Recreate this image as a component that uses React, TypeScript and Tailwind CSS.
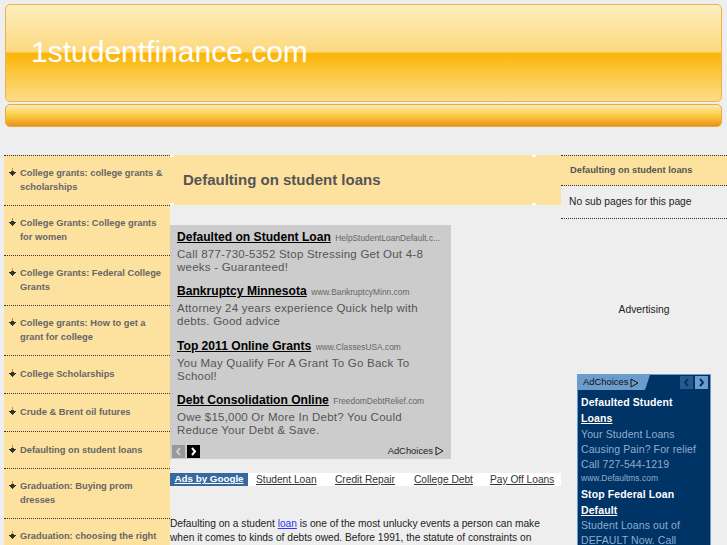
const menu = [
  { lines: ['College grants: college grants &', 'scholarships'], h: 'h-[50px]' },
  { lines: ['College Grants: College grants', 'for women'], h: 'h-[50px]' },
  { lines: ['College Grants: Federal College', 'Grants'], h: 'h-[50px]' },
  { lines: ['College grants: How to get a', 'grant for college'], h: 'h-[50px]' },
  { lines: ['College Scholarships'], h: 'h-[38px]' },
  { lines: ['Crude & Brent oil futures'], h: 'h-[38px]' },
  { lines: ['Defaulting on student loans'], h: 'h-[37px]' },
  { lines: ['Graduation: Buying prom', 'dresses'], h: 'h-[50px]' },
  { lines: ['Graduation: choosing the right'], h: 'h-[50px]' },
];

const ads = [
  {
    title: 'Defaulted on Student Loan',
    url: 'HelpStudentLoanDefault.c...',
    lines: ['Call 877-730-5352 Stop Stressing Get Out 4-8', 'weeks - Guaranteed!'],
  },
  {
    title: 'Bankruptcy Minnesota',
    url: 'www.BankruptcyMinn.com',
    lines: ['Attorney 24 years experience Quick help with', 'debts. Good advice'],
  },
  {
    title: 'Top 2011 Online Grants',
    url: 'www.ClassesUSA.com',
    lines: ['You May Qualify For A Grant To Go Back To', 'School!'],
  },
  {
    title: 'Debt Consolidation Online',
    url: 'FreedomDebtRelief.com',
    lines: ['Owe $15,000 Or More In Debt? You Could', 'Reduce Your Debt & Save.'],
  },
];

function MenuArrow() {
  return (
    <svg width="9" height="9" viewBox="0 0 9 9" className="shrink-0">
      <path d="M4 0h1v3H4z" fill="#d98a10" />
      <path d="M3 3h3v2H3zM1 4h7v1H1zM2 5h5v1H2zM3 6h3v1H3zM4 7h1v1H4z" fill="#333" />
    </svg>
  );
}

function AdChoicesIcon({ stroke }: { stroke: string }) {
  return (
    <svg width="9" height="10" viewBox="0 0 9 10">
      <path d="M1 1v8l7-4z" fill="none" stroke={stroke} strokeWidth="1" />
    </svg>
  );
}

function Notch({ className }: { className: string }) {
  return <span className={`absolute h-[2px] w-[4px] bg-white ${className}`} />;
}

export default function App() {
  return (
    <div className="h-[545px] w-[727px] overflow-hidden bg-[#eeeeee] font-['Liberation_Sans',Arial,sans-serif]">
      {/* header */}
      <div className="px-[5px] pt-[4px]">
        <div className="flex h-[98px] items-center rounded-[5px] border border-[#e9b44c] bg-[linear-gradient(#fdeebf_0%,#fdd97f_49%,#fbb408_50%,#fcc53a_70%,#fddc8a_100%)] pl-[25px] pb-[2px] text-[30px] leading-none text-white">
          1studentfinance.com
        </div>
        <div className="mt-[2px] h-[23px] rounded-[5px] border border-[#e8a94a] bg-[linear-gradient(#fdebb0_0%,#fbd14e_45%,#f7b52e_70%,#e8921a_100%)]" />
      </div>

      <div className="mt-[28px] flex items-start">
        {/* left menu */}
        <div className="w-[170px] pl-[4px]">
          <ul className="bg-[#fde29f]">
            {menu.map((item, i) => (
              <li
                key={item.lines[0]}
                className={`${item.h} flex border-t border-dotted border-[#333] pl-[4px] pb-[1px] ${i === menu.length - 1 ? 'items-start pt-[10px]' : 'items-center'}`}
              >
                <div className="flex w-full items-start">
                  <span className="mt-[2px] mr-[3px]">
                    <MenuArrow />
                  </span>
                  <div className="text-[9.3px] leading-[14px] font-bold text-[#666666]">
                    {item.lines.map((line) => (
                      <div key={line} className="whitespace-nowrap">{line}</div>
                    ))}
                  </div>
                </div>
              </li>
            ))}
          </ul>
        </div>

        {/* center */}
        <div className="w-[391px] min-w-0">
          <div className="relative flex h-[50px] items-center bg-[#fde29f] pl-[13px] text-[15px] font-bold text-[#555555]">
            Defaulting on student loans
            <Notch className="top-0 left-0" />
            <Notch className="bottom-0 left-0" />
            <Notch className="top-0 left-[362px]" />
            <Notch className="bottom-0 left-[362px]" />
          </div>

          <div className="mt-[20px] h-[234px] w-[281px] bg-[#cccccc] px-[7px] pt-[4px]">
            {ads.map((ad) => (
              <div key={ad.title} className="mb-[9.4px] h-[45px] whitespace-nowrap">
                <div className="leading-[13px]">
                  <span className="text-[12.1px] font-bold text-black underline">{ad.title}</span>{' '}
                  <span className="text-[8.4px] text-[#666666]">{ad.url}</span>
                </div>
                <div className="mt-[3px] text-[11.5px] leading-[13px] tracking-[0.23px] text-[#555555]">
                  {ad.lines.map((line) => (
                    <div key={line}>{line}</div>
                  ))}
                </div>
              </div>
            ))}
            <div className="relative -mx-[5px] -mt-[2.6px] flex items-center gap-[2px]">
              <span className="flex h-[13px] w-[13px] items-center justify-center bg-[#999999]">
                <svg width="7" height="9" viewBox="0 0 7 9"><path d="M5 1 2 4.5 5 8" fill="none" stroke="#cccccc" strokeWidth="2" /></svg>
              </span>
              <span className="flex h-[13px] w-[13px] items-center justify-center bg-black">
                <svg width="7" height="9" viewBox="0 0 7 9"><path d="M2 1l3 3.5L2 8" fill="none" stroke="#ffffff" strokeWidth="2" /></svg>
              </span>
              <span className="ml-auto mr-[5px] flex items-center gap-[2px] text-[9.4px] text-[#222222]">
                AdChoices <AdChoicesIcon stroke="#222222" />
              </span>
            </div>
          </div>

          <div className="mt-[14px] flex h-[13px] items-center whitespace-nowrap bg-white text-[10.2px] text-[#333333]">
            <span className="mr-[8px] flex h-[13px] w-[78px] items-center justify-center bg-[#36699f] text-[9.8px] font-bold text-white underline">
              Ads by Google
            </span>
            <span className="w-[79px] underline">Student Loan</span>
            <span className="w-[79px] underline">Credit Repair</span>
            <span className="w-[76px] underline">College Debt</span>
            <span className="underline">Pay Off Loans</span>
          </div>

          <p className="mt-[31px] whitespace-nowrap text-[10.2px] leading-[14px] text-[#222222]">
            Defaulting on a student <span className="text-[#3333ff] underline">loan</span> is one of the most unlucky events a person can make
            <br />
            when it comes to kinds of debts owed. Before 1991, the statute of constraints on
          </p>
        </div>

        {/* right */}
        <div className="w-[166px]">
          <div className="flex h-[31px] items-center border-t border-b border-dotted border-[#333] bg-[#fde29f] pl-[9px] text-[9.3px] font-bold text-[#555555]">
            Defaulting on student loans
          </div>
          <div className="flex h-[33px] items-center border-b border-dotted border-[#333] pl-[8px] text-[10.25px] text-[#222222]">
            No sub pages for this page
          </div>
          <div className="mt-[84px] text-center text-[10.3px] leading-[14px] text-[#222222]">Advertising</div>
          <div className="mt-[57px] ml-[16px] w-[134px] border border-[#6b9ccc] bg-[#003366] pb-[20px]">
            <div className="flex h-[15px] items-center">
              <div className="flex h-[15px] w-[72px] items-center gap-[2px] bg-[#6b9ccc] pl-[5px] text-[9.4px] text-[#111] [clip-path:polygon(0_0,100%_0,93%_100%,0_100%)]">
                AdChoices <AdChoicesIcon stroke="#111111" />
              </div>
              <span className="ml-auto flex h-[13px] w-[13px] items-center justify-center bg-[#255a8f]">
                <svg width="7" height="9" viewBox="0 0 7 9"><path d="M5 1 2 4.5 5 8" fill="none" stroke="#003366" strokeWidth="2" /></svg>
              </span>
              <span className="mx-[2px] flex h-[13px] w-[13px] items-center justify-center bg-[#6b9ccc]">
                <svg width="7" height="9" viewBox="0 0 7 9"><path d="M2 1l3 3.5L2 8" fill="none" stroke="#003366" strokeWidth="2" /></svg>
              </span>
            </div>
            <div className="whitespace-nowrap px-[3px] pt-[4px]">
              <div className="text-[10.5px] leading-[16px] font-bold tracking-[0.1px] text-white">
                Defaulted Student
                <br />
                <span className="underline">Loans</span>
              </div>
              <div className="mt-[1px] text-[10.5px] leading-[15px] tracking-[0.1px] text-[#8fadcf]">
                Your Student Loans
                <br />
                Causing Pain? For relief
                <br />
                Call 727-544-1219
              </div>
              <div className="text-[8.5px] leading-[12px] text-[#8fadcf]">www.Defaultms.com</div>
              <div className="mt-[2px] text-[10.5px] leading-[16px] font-bold tracking-[0.1px] text-white">
                Stop Federal Loan
                <br />
                <span className="underline">Default</span>
              </div>
              <div className="text-[10.5px] leading-[15px] tracking-[0.1px] text-[#8fadcf]">
                Student Loans out of
                <br />
                DEFAULT Now. Call
              </div>
            </div>
          </div>
        </div>
      </div>
    </div>
  );
}
